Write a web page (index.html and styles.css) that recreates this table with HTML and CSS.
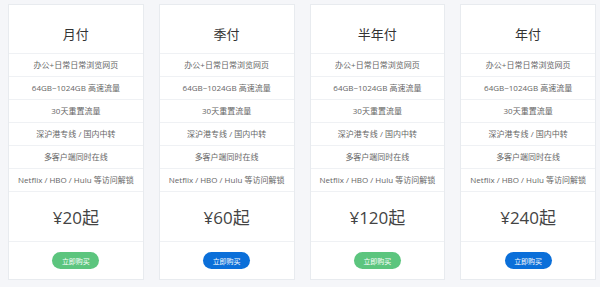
FILE: index.html
```html
<!DOCTYPE html>
<html lang="zh-CN">
<head>
    <meta charset="UTF-8">
    <meta name="viewport" content="width=device-width, initial-scale=1.0">
    <title>套餐价格</title>
    <link rel="stylesheet" href="styles.css">
</head>
<body>
    <div class="pricing">
        <div class="plan">
            <div class="plan-title">月付</div>
            <ul class="plan-features">
                <li>办公+日常日常浏览网页</li>
                <li>64GB~1024GB 高速流量</li>
                <li>30天重置流量</li>
                <li>深沪港专线 / 国内中转</li>
                <li>多客户端同时在线</li>
                <li>Netflix / HBO / Hulu 等访问解锁</li>
            </ul>
            <div class="plan-price">¥20起</div>
            <div class="plan-action"><a href="#" class="buy-btn green">立即购买</a></div>
        </div>

        <div class="plan">
            <div class="plan-title">季付</div>
            <ul class="plan-features">
                <li>办公+日常日常浏览网页</li>
                <li>64GB~1024GB 高速流量</li>
                <li>30天重置流量</li>
                <li>深沪港专线 / 国内中转</li>
                <li>多客户端同时在线</li>
                <li>Netflix / HBO / Hulu 等访问解锁</li>
            </ul>
            <div class="plan-price">¥60起</div>
            <div class="plan-action"><a href="#" class="buy-btn blue">立即购买</a></div>
        </div>

        <div class="plan">
            <div class="plan-title">半年付</div>
            <ul class="plan-features">
                <li>办公+日常日常浏览网页</li>
                <li>64GB~1024GB 高速流量</li>
                <li>30天重置流量</li>
                <li>深沪港专线 / 国内中转</li>
                <li>多客户端同时在线</li>
                <li>Netflix / HBO / Hulu 等访问解锁</li>
            </ul>
            <div class="plan-price">¥120起</div>
            <div class="plan-action"><a href="#" class="buy-btn green">立即购买</a></div>
        </div>

        <div class="plan">
            <div class="plan-title">年付</div>
            <ul class="plan-features">
                <li>办公+日常日常浏览网页</li>
                <li>64GB~1024GB 高速流量</li>
                <li>30天重置流量</li>
                <li>深沪港专线 / 国内中转</li>
                <li>多客户端同时在线</li>
                <li>Netflix / HBO / Hulu 等访问解锁</li>
            </ul>
            <div class="plan-price">¥240起</div>
            <div class="plan-action"><a href="#" class="buy-btn blue">立即购买</a></div>
        </div>
    </div>
</body>
</html>
```

FILE: styles.css
```css
* {
    margin: 0;
    padding: 0;
    box-sizing: border-box;
}

body {
    font-family: "Open Sans", "Noto Sans CJK SC", sans-serif;
    background: #f5f6f9;
    color: #333;
}

.pricing {
    display: grid;
    grid-template-columns: repeat(4, 1fr);
    gap: 15px;
    padding: 4px 4px 0 8px;
}

.plan {
    background: #fff;
    border: 1px solid #e8ebef;
    text-align: center;
}

.plan-title {
    height: 49px;
    padding-top: 9px;
    display: flex;
    align-items: center;
    justify-content: center;
    font-size: 13px;
    color: #333;
    border-bottom: 1px solid #eff1f4;
}

.plan-features {
    list-style: none;
}

.plan-features li {
    height: 23px;
    line-height: 22px;
    font-size: 8px;
    color: #666;
    border-bottom: 1px solid #eff1f4;
    white-space: nowrap;
}

.plan-price {
    height: 50px;
    display: flex;
    align-items: center;
    justify-content: center;
    font-size: 17px;
    color: #444;
    border-bottom: 1px solid #eff1f4;
}

.plan-action {
    height: 37px;
    display: flex;
    align-items: center;
    justify-content: center;
}

.buy-btn {
    display: inline-flex;
    align-items: center;
    justify-content: center;
    width: 47px;
    height: 17px;
    border-radius: 9px;
    font-size: 7px;
    color: #fff;
    text-decoration: none;
}

.buy-btn.green {
    background: #5cc57e;
}

.buy-btn.blue {
    background: #0b6fd9;
}
```
